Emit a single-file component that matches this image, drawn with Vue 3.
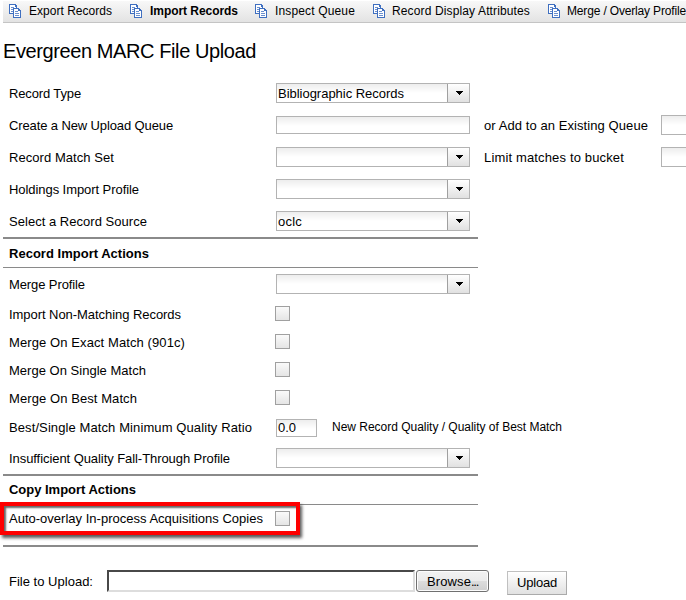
<script setup>
const tabs = [
  { label: 'Export Records', slot: 121, w: 83 },
  { label: 'Import Records', slot: 125, w: 88, active: true },
  { label: 'Inspect Queue', slot: 118, w: 80 },
  { label: 'Record Display Attributes', slot: 175, w: 138, tight: true },
  { label: 'Merge / Overlay Profile', slot: 138, w: 119, tight: true },
]
const sourceRows = [
  { label: 'Record Type', w: 72, kind: 'select', value: 'Bibliographic Records', vw: 126 },
  { label: 'Create a New Upload Queue', w: 164, kind: 'text', side: 'or Add to an Existing Queue', sw: 164 },
  { label: 'Record Match Set', w: 105, kind: 'select', side: 'Limit matches to bucket', sw: 140 },
  { label: 'Holdings Import Profile', w: 130, kind: 'select' },
  { label: 'Select a Record Source', w: 138, kind: 'select', value: 'oclc', vw: 24 },
]
const matchRows = [
  { label: 'Import Non-Matching Records', w: 172 },
  { label: 'Merge On Exact Match (901c)', w: 176 },
  { label: 'Merge On Single Match', w: 137 },
  { label: 'Merge On Best Match', w: 128 },
]

// Spreads a line of text over a fixed measure by adjusting its tracking.
const vFit = {
  mounted(el, { value }) {
    if (!value) return
    const natural = el.getBoundingClientRect().width
    const count = el.textContent.length
    el.style.letterSpacing = `${(value - natural) / count}px`
  },
}
</script>

<template>
  <main class="page">
    <nav class="toolbar">
      <a v-for="t in tabs" :key="t.label" class="tab" :class="{ active: t.active, tight: t.tight }" :style="{ width: t.slot + 'px' }">
        <svg class="icon" width="12" height="14" viewBox="0 0 12 14" shape-rendering="crispEdges">
          <path d="M0 0h7v1h1v9H0z" fill="#3f6fc0" />
          <path d="M1 1h5v2h1v6H1z" fill="#fff" />
          <path d="M2 3h3v1H2zM2 5h2v1H2zM2 7h2v1H2z" fill="#6a8fce" />
          <path d="M4 4h6v1h1v1h1v8H4z" fill="#3f6fc0" />
          <path d="M5 5h4v2h2v6H5z" fill="#fff" />
          <path d="M6 7h3v1H6zM6 9h4v1H6zM6 11h4v1H6z" fill="#6a8fce" />
        </svg>
        <span v-fit="t.w">{{ t.label }}</span>
      </a>
    </nav>

    <h1><span v-fit="253">Evergreen MARC File Upload</span></h1>

    <section class="form">
      <div v-for="r in sourceRows" :key="r.label" class="row">
        <label><span v-fit="r.w">{{ r.label }}</span></label>
        <div v-if="r.kind === 'select'" class="select">
          <div class="value"><span v-fit="r.vw">{{ r.value }}</span></div>
          <div class="arrow"><svg width="7" height="4" viewBox="0 0 7 4" shape-rendering="crispEdges"><path d="M0 0h7v1H6v1H5v1H4v1H3V3H2V2H1V1H0z" /></svg></div>
        </div>
        <div v-else class="text"></div>
        <template v-if="r.side">
          <div class="side"><span v-fit="r.sw">{{ r.side }}</span></div>
          <div class="select"><div class="value"></div></div>
        </template>
      </div>

      <h2 class="lower"><span v-fit="140">Record Import Actions</span></h2>

      <div class="row">
        <label><span v-fit="76">Merge Profile</span></label>
        <div class="select">
          <div class="value"></div>
          <div class="arrow"><svg width="7" height="4" viewBox="0 0 7 4" shape-rendering="crispEdges"><path d="M0 0h7v1H6v1H5v1H4v1H3V3H2V2H1V1H0z" /></svg></div>
        </div>
      </div>
      <div v-for="r in matchRows" :key="r.label" class="row short">
        <label><span v-fit="r.w">{{ r.label }}</span></label>
        <div class="check"></div>
      </div>
      <div class="row ratio">
        <label><span v-fit="243">Best/Single Match Minimum Quality Ratio</span></label>
        <div class="text small"><span v-fit="18">0.0</span></div>
        <div class="note"><span v-fit="230">New Record Quality / Quality of Best Match</span></div>
      </div>
      <div class="row">
        <label><span v-fit="221">Insufficient Quality Fall-Through Profile</span></label>
        <div class="select">
          <div class="value"></div>
          <div class="arrow"><svg width="7" height="4" viewBox="0 0 7 4" shape-rendering="crispEdges"><path d="M0 0h7v1H6v1H5v1H4v1H3V3H2V2H1V1H0z" /></svg></div>
        </div>
      </div>

      <h2><span v-fit="127">Copy Import Actions</span></h2>

      <div class="row short marked">
        <label><span v-fit="254">Auto-overlay In-process Acquisitions Copies</span></label>
        <div class="check"></div>
        <div class="highlight"></div>
      </div>
      <div class="end"></div>
    </section>

    <section class="upload">
      <label><span v-fit="84">File to Upload:</span></label>
      <div class="file"></div>
      <button class="browse"><span v-fit="44">Browse</span><span v-fit="7">...</span></button>
      <button class="submit"><span v-fit="40">Upload</span></button>
    </section>
  </main>
</template>

<style>
body { margin: 0; background: #fff; overflow: hidden; }
</style>

<style scoped>
.page {
  box-sizing: border-box;
  width: 686px;
  height: 600px;
  padding: 1px 0 0 3px;
  overflow: hidden;
  font: 13px/16px "Liberation Sans", Arial, sans-serif;
  color: #000;
  white-space: nowrap;
}
.toolbar {
  box-sizing: border-box;
  display: flex;
  height: 22px;
  padding-left: 6px;
  border-bottom: 1px solid #c4c4c4;
  background: linear-gradient(#f8f8f8, #e3e3e3);
  font-size: 12px;
}
.tab { display: flex; flex: none; gap: 8px; padding-top: 2px; line-height: 16px; }
.tab.active { font-weight: bold; }
.tab.tight { gap: 7px; }
.icon { flex: none; margin-top: 1px; }
h1 { margin: 0; height: 54px; font-size: 20px; font-weight: normal; line-height: 56px; }
.row { display: flex; align-items: center; height: 32px; }
.row.short { height: 28px; }
.row.ratio { height: 30px; }
.row > label { flex: none; width: 267px; padding: 2px 0 0 6px; }
.select, .text {
  box-sizing: border-box;
  display: flex;
  flex: none;
  width: 194px;
  height: 20px;
  border: 1px solid #b3b3b3;
  background: linear-gradient(#ededed, #fff 9px);
}
.text { height: 18px; }
.value { flex: 1; padding-left: 1px; line-height: 19px; }
.arrow {
  box-sizing: border-box;
  display: flex;
  align-items: center;
  justify-content: center;
  width: 22px;
  padding-left: 2px;
  border-left: 1px solid #a0a0a0;
  background: linear-gradient(#fff, #e1e1e1);
}
.text.small { width: 41px; padding-left: 1px; margin-top: 2px; line-height: 16px; }
.side { flex: none; width: 177px; padding: 2px 0 0 14px; }
.note { padding-left: 15px; font-size: 12px; }
.check {
  box-sizing: border-box;
  width: 15px;
  height: 15px;
  margin: 0 0 1px -1px;
  border: 1px solid #a0a0a0;
  background: linear-gradient(#fafafa, #e5e5e5);
}
h2 {
  box-sizing: border-box;
  width: 475px;
  height: 31px;
  margin: 0;
  padding-left: 6px;
  border-top: 2px solid #8a8a8a;
  border-bottom: 1px solid #8a8a8a;
  font-size: 13px;
  line-height: 28px;
}
h2.lower { line-height: 30px; }
.marked { position: relative; }
.row.marked > label { padding-top: 0; }
.highlight {
  position: absolute;
  box-sizing: border-box;
  left: -3px;
  top: -3px;
  width: 300px;
  height: 33px;
  border: 4px solid #fe0000;
  box-shadow: 2px 3px 3px rgba(0, 0, 0, .65), inset 2px 2px 2px rgba(0, 0, 0, .6);
}
.end { width: 475px; height: 2px; margin-top: 12px; background: #8a8a8a; }
.upload { display: flex; align-items: flex-start; padding-top: 23px; }
.upload label { width: 98px; padding: 4px 0 0 6px; }
.file {
  box-sizing: border-box;
  width: 308px;
  height: 22px;
  border: 2px solid #484848;
  border-right-color: #ddd;
  border-bottom-color: #ddd;
}
button { box-sizing: border-box; padding: 0; font: inherit; color: #000; }
.browse {
  width: 73px;
  height: 22px;
  margin-left: 1px;
  padding-top: 2px;
  border: 1px solid #707070;
  border-radius: 3px;
  background: linear-gradient(#f2f2f2, #ebebeb 50%, #dddddd 50%, #cfcfcf);
  box-shadow: inset 0 0 0 1px #fcfcfc;
}
.submit {
  width: 60px;
  height: 24px;
  margin: 1px 0 0 18px;
  border: 1px solid #c0c0c0;
  border-right-color: #aaa;
  border-bottom-color: #aaa;
  background: linear-gradient(#fff, #e1e1e1);
}
</style>
